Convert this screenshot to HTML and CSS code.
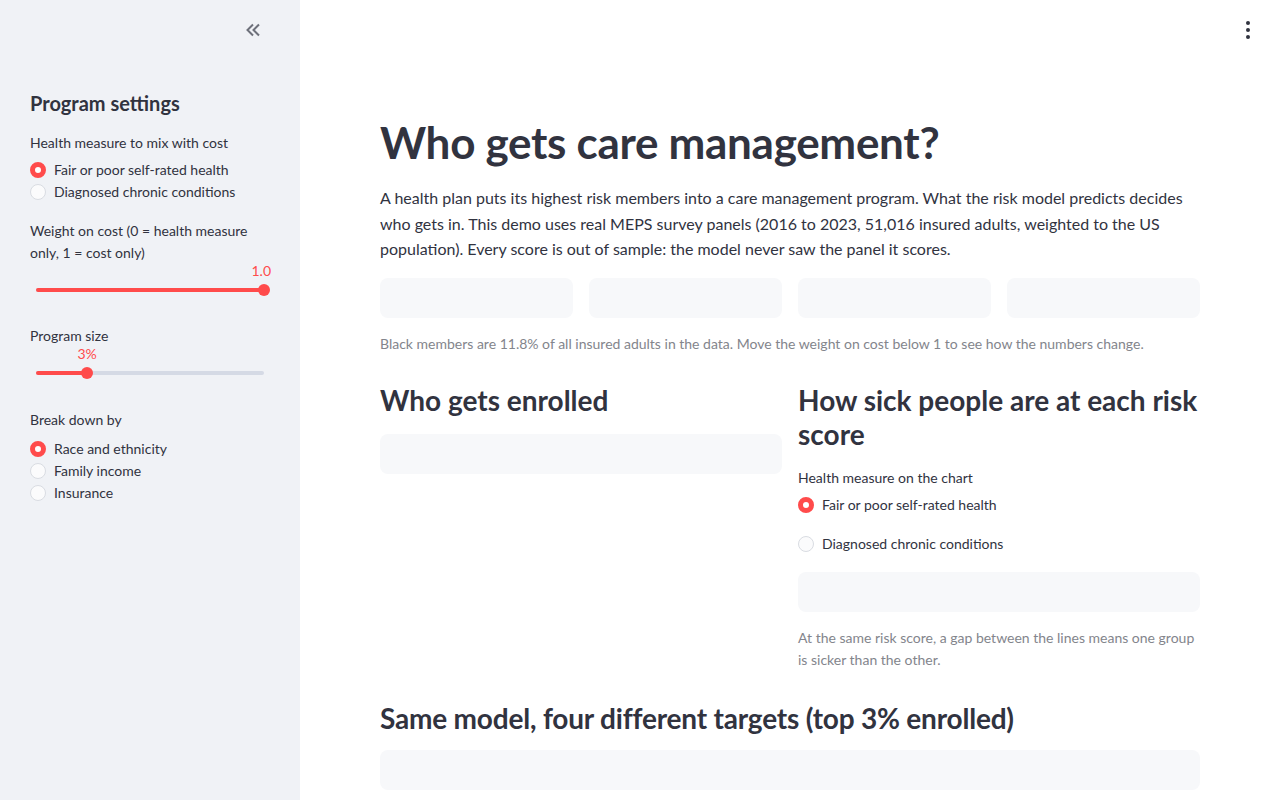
FILE: index.html
```html
<!DOCTYPE html>
<html>
<head>
  <title>Who gets care management?</title>
  <link rel="stylesheet" href="styles.css">
</head>
<body>

  <div class="app">
    <aside class="sidebar">
      <div class="sidebar-top">
        <button class="collapse" title="Collapse sidebar">
          <svg viewBox="0 0 16 14" width="16" height="14"><path d="M8 1.5 2.5 7 8 12.5M14 1.5 8.5 7l5.5 5.5"/></svg>
        </button>
      </div>

      <h2 class="side-title">Program settings</h2>

      <div class="widget">
        <div class="label">Health measure to mix with cost</div>
        <div class="radios">
          <label class="radio checked"><span class="dot"></span>Fair or poor self-rated health</label>
          <label class="radio"><span class="dot"></span>Diagnosed chronic conditions</label>
        </div>
      </div>

      <div class="widget">
        <div class="label">Weight on cost (0 = health measure only, 1 = cost only)</div>
        <div class="slider">
          <div class="track"><div class="fill" style="width: 100%"></div></div>
          <div class="thumb" style="left: 100%"><span class="value right">1.0</span></div>
        </div>
      </div>

      <div class="widget">
        <div class="label">Program size</div>
        <div class="slider tall">
          <div class="track"><div class="fill" style="width: 22.4%"></div></div>
          <div class="thumb" style="left: 22.4%"><span class="value">3%</span></div>
        </div>
      </div>

      <div class="widget">
        <div class="label">Break down by</div>
        <div class="radios loose">
          <label class="radio checked"><span class="dot"></span>Race and ethnicity</label>
          <label class="radio"><span class="dot"></span>Family income</label>
          <label class="radio"><span class="dot"></span>Insurance</label>
        </div>
      </div>
    </aside>

    <main class="main">
      <header class="toolbar">
        <button class="menu" title="Main menu">
          <span></span><span></span><span></span>
        </button>
      </header>

      <div class="block">
        <h1>Who gets care management?</h1>
        <p class="intro">A health plan puts its highest risk members into a care management program. What the risk model predicts decides who gets in. This demo uses real MEPS survey panels (2016 to 2023, 51,016 insured adults, weighted to the US population). Every score is out of sample: the model never saw the panel it scores.</p>

        <div class="metrics">
          <div class="placeholder"></div>
          <div class="placeholder"></div>
          <div class="placeholder"></div>
          <div class="placeholder"></div>
        </div>

        <p class="caption">Black members are 11.8% of all insured adults in the data. Move the weight on cost below 1 to see how the numbers change.</p>

        <div class="columns">
          <section class="col">
            <h3>Who gets enrolled</h3>
            <div class="placeholder"></div>
          </section>
          <section class="col">
            <h3>How sick people are at each risk score</h3>
            <div class="label">Health measure on the chart</div>
            <div class="radios spaced">
              <label class="radio checked"><span class="dot"></span>Fair or poor self-rated health</label>
              <label class="radio"><span class="dot"></span>Diagnosed chronic conditions</label>
            </div>
            <div class="placeholder"></div>
            <p class="caption">At the same risk score, a gap between the lines means one group is sicker than the other.</p>
          </section>
        </div>

        <h3 class="bottom-title">Same model, four different targets (top 3% enrolled)</h3>
        <div class="placeholder"></div>
      </div>
    </main>
  </div>

</body>
</html>
```

FILE: styles.css
```css
* { box-sizing: border-box; margin: 0; padding: 0; }

body {
  font-family: Lato, "Noto Sans", sans-serif;
  color: #31333f;
  background: white;
  overflow: hidden;
}

.app {
  display: flex;
  height: 100vh;
}

/* sidebar */
.sidebar {
  width: 300px;
  flex-shrink: 0;
  background: #f0f2f6;
  padding: 0 30px;
}

.sidebar-top {
  height: 60px;
  display: flex;
  justify-content: flex-end;
  align-items: center;
  padding-right: 9px;
}

.collapse, .menu {
  background: none;
  border: none;
  cursor: pointer;
}

.collapse svg {
  fill: none;
  stroke: #6d707a;
  stroke-width: 2;
  display: block;
}

.side-title {
  margin-top: 31px;
  font-size: 20px;
  font-weight: 700;
  line-height: 24px;
  margin-bottom: 17px;
}

.widget {
  margin-bottom: 17px;
}

.label {
  font-size: 14px;
  line-height: 22px;
}

.radios {
  margin-top: 5px;
}

.radios.loose {
  margin-top: 7px;
}

.radio {
  display: flex;
  align-items: center;
  gap: 8px;
  font-size: 14px;
  line-height: 22px;
  cursor: pointer;
}

.dot {
  width: 16px;
  height: 16px;
  border-radius: 50%;
  border: 1px solid #d9dce2;
  background: #fbfbfc;
  flex-shrink: 0;
}

.radio.checked .dot {
  border: 5px solid #ff4b4b;
  background: white;
}

.radios.spaced {
  margin-top: 5px;
  display: flex;
  flex-direction: column;
  gap: 17px;
}

/* slider */
.slider {
  position: relative;
  height: 44px;
  margin: 0 6px;
}

.slider.tall {
  height: 45px;
}

.track {
  position: absolute;
  left: 0;
  right: 0;
  top: 24px;
  height: 4px;
  border-radius: 2px;
  background: #d5dae5;
}

.fill {
  height: 100%;
  background: #ff4b4b;
  border-radius: 2px;
}

.thumb {
  position: absolute;
  top: 20px;
  width: 12px;
  height: 12px;
  margin-left: -6px;
  border-radius: 50%;
  background: #ff4b4b;
}

.value {
  position: absolute;
  bottom: 16px;
  left: 50%;
  transform: translateX(-50%);
  font-size: 14px;
  line-height: 18px;
  color: #ff4b4b;
  white-space: nowrap;
}

.value.right {
  left: auto;
  right: -1px;
  transform: none;
}

/* main */
.main {
  flex: 1;
  display: flex;
  flex-direction: column;
  overflow: hidden;
}

.toolbar {
  height: 60px;
  display: flex;
  justify-content: flex-end;
  align-items: center;
  padding-right: 22px;
  flex-shrink: 0;
}

.menu {
  display: flex;
  flex-direction: column;
  gap: 3px;
  padding: 4px 8px;
}

.menu span {
  width: 4px;
  height: 4px;
  border-radius: 50%;
  background: #31333f;
}

.block {
  width: 820px;
  margin: 0 auto;
  padding-top: 56px;
}

h1 {
  font-size: 44px;
  font-weight: 700;
  line-height: 53px;
  letter-spacing: -0.3px;
  margin-bottom: 16px;
}

.intro {
  font-size: 16px;
  line-height: 25.6px;
  margin-bottom: 16px;
}

.metrics {
  display: grid;
  grid-template-columns: repeat(4, 1fr);
  gap: 16px;
  margin-bottom: 15px;
}

.placeholder {
  height: 40px;
  background: #f7f8fa;
  border-radius: 8px;
}

.caption {
  font-size: 14px;
  line-height: 22px;
  color: #83858c;
}

.columns {
  display: grid;
  grid-template-columns: 1fr 1fr;
  gap: 16px;
  margin-top: 28px;
}

h3 {
  font-size: 28px;
  font-weight: 700;
  line-height: 34px;
  margin-bottom: 17px;
}

.col .label {
  margin-top: -1px;
}

.col .placeholder + .caption {
  margin-top: 15px;
}

.col .radios + .placeholder {
  margin-top: 17px;
}

.bottom-title {
  margin-top: 30px;
  margin-bottom: 15px;
  letter-spacing: -0.2px;
}
```
